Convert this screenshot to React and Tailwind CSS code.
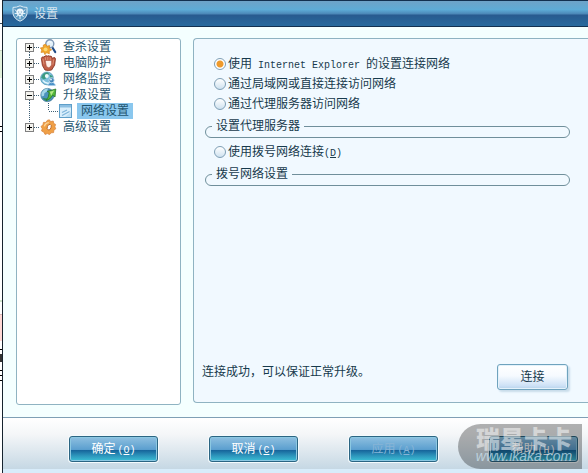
import { useState } from 'react';

const ScanIcon = () => (
    <svg width="17" height="16" viewBox="0 0 17 16" className="shrink-0">
        <path d="M12.4 8.5 15.2 13" stroke="#1d4a86" strokeWidth="2.2" strokeLinecap="round" />
        <circle cx="9.8" cy="4.8" r="4" fill="#e3f1fa" stroke="#8098b5" strokeWidth="1.4" />
        <path d="M7.8 3.6q1.6-1.8 3.6-.2" stroke="#fff" fill="none" />
        <path
            d="M5.6 5.2 6.9 7.3 9.6 6.6 9.3 9.2 11.6 10.8 9.2 12 9.3 14.8 6.8 13.7 4.8 15.6 3.9 13 1 13.4 1.9 11 .4 8.9 3.2 8.6 3.4 6z"
            fill="#f2a92e"
            stroke="#d98a24"
            strokeWidth=".8"
        />
        <circle cx="5.6" cy="10.3" r="1.9" fill="#fbd874" />
    </svg>
);

const GloveIcon = () => (
    <svg width="17" height="16" viewBox="0 0 17 16" className="shrink-0">
        <path
            d="M5 15 2.4 10.4 1.4 3.4Q2 1.2 3.8 2L5.2 1Q6.4.2 7.2 1.2 8.6.2 9.8 1.2 11.2.8 12 2.2l.4 1.6 1.4-1.2q1.6-.2 1.6 1.4L14.6 10.2 11.6 15q-3.4.9-6.6 0z"
            fill="#c05f47"
            stroke="#8a3323"
            strokeWidth=".9"
        />
        <path d="M5.2 5.4h6.4V10L9 13 6.4 11.4z" fill="#fdeee6" stroke="#9c3f2c" strokeWidth=".5" />
        <path d="M3 4 4 9.4M5.4 2.2 5.6 5M7.8 2v3M10.2 2.4v2.8M13.8 4.4 12.8 9.6" stroke="#e49a80" strokeWidth=".8" />
    </svg>
);

const MonitorIcon = () => (
    <svg width="17" height="16" viewBox="0 0 17 16" className="shrink-0">
        <circle cx="7" cy="7.4" r="6.4" fill="#7dbfdc" stroke="#4f93b2" strokeWidth=".7" />
        <path d="M1.2 6.8Q2.6 1.6 7.2 1.2L9.4 3 6.6 5 6 7.6 3.8 8.6z" fill="#3c9a82" />
        <path d="M9.6 3.8 12.4 5 13 8 10.4 7.6z" fill="#3a9c7c" />
        <path d="M2.8 9.4q2.6 3.6 6.6 2.6" stroke="#e2f6ff" strokeWidth="1.6" fill="none" />
        <circle cx="6.8" cy="5" r="1.9" fill="#eefafb" />
        <path d="M7.4 14.8q.8-3.6 4.2-3.6t4.2 3.6z" fill="#4a91c8" stroke="#e9f6ff" strokeWidth=".6" />
        <circle cx="11.6" cy="9.2" r="2.6" fill="#4585b8" stroke="#d9ecf9" strokeWidth=".7" />
        <circle cx="11" cy="8.6" r="1" fill="#d9ecf9" />
    </svg>
);

const UpdateIcon = () => (
    <svg width="17" height="16" viewBox="0 0 17 16" className="shrink-0">
        <circle cx="7.4" cy="8" r="6.6" fill="#4c93bd" stroke="#35708f" strokeWidth=".7" />
        <path d="M1.4 6.4Q3.4 1.8 8 1.6L7 4.4 4.4 6.2 4 8.8 1.6 9.4z" fill="#a3d6e8" />
        <path d="M2.6 10.8q1.4 3 5.2 3.4l-1-2.6z" fill="#2f8b5c" />
        <path d="M15.8 2 15 10 12.8 8.2Q10.4 12.8 6 13.4 9 10.4 9.2 5.6L7.2 4.4z" fill="#55b83c" stroke="#26752a" strokeWidth=".8" />
        <path d="M14.2 3.6 9.8 4.8l1.4 4z" fill="#b4e787" />
    </svg>
);

const GearIcon = () => (
    <svg width="17" height="16" viewBox="0 0 17 16" className="shrink-0">
        <path
            d="M7.2 1.4 9.4.8l1.2 1.8L13.2 2l.6 2.6 1.8.8-.8 2.4 1 2-2 1.4-.2 2.4-2.6.2L9.6 15.6l-2.2-1L5 15.4 3.8 13 1.6 12l.6-2.4L1 7.4l2-1.4L3.4 3.4l2.6 0z"
            fill="#f0a046"
            stroke="#d98640"
            strokeWidth=".8"
        />
        <path d="M4.4 7.4Q5.2 4 8.8 3.6" stroke="#fbd69c" strokeWidth="1.3" fill="none" />
        <ellipse cx="9.2" cy="8.2" rx="1.9" ry="2.9" transform="rotate(20 9.2 8.2)" fill="#fff" stroke="#b9682a" strokeWidth=".9" />
    </svg>
);

const PageIcon = () => (
    <svg width="14" height="16" viewBox="0 0 14 16" className="shrink-0">
        <rect x=".5" y="1.5" width="12" height="13" fill="#d9eefb" stroke="#5f9fc9" />
        <rect x="1" y="2" width="11" height="2.5" fill="#8dbfe2" />
        <path d="M3 12.5 10.5 8.5M3 9.5 8 7" stroke="#7db4da" strokeWidth="1.2" />
        <path d="M12 9v5H6z" fill="#a8d3ee" opacity=".6" />
    </svg>
);

const ShieldLogo = () => (
    <svg width="16" height="17" viewBox="0 0 16 17" className="shrink-0">
        <path d="M1 2.4Q4.4 2.6 8 .8q3.6 1.8 7 1.6v6.2q-.8 5-7 7.6-6.2-2.6-7-7.6z" fill="#5f9cc4" stroke="#dcebf5" />
        <path d="M4.2 6.8Q5 3.6 8 3.6t3.8 3.2L10.6 10 8 11.4 5.4 10z" fill="#eef7fc" />
        <path d="M2.6 4.4 4.4 6M13.4 4.4 11.6 6M2.6 8.4 5 8.6M13.4 8.4 11 8.6M4.4 12l1.8-2M11.6 12 9.8 10M8 14v-3" stroke="#e4f1f9" />
        <path d="M6.2 7h1M8.8 7h1M6.8 9.2h2.4" stroke="#5d95bb" />
    </svg>
);

const NODES = [
    { label: '查杀设置', Icon: ScanIcon },
    { label: '电脑防护', Icon: GloveIcon },
    { label: '网络监控', Icon: MonitorIcon },
    { label: '升级设置', Icon: UpdateIcon, children: ['网络设置'] },
    { label: '高级设置', Icon: GearIcon },
];

const Branch = ({ open, first, last }) => (
    <svg width="15" height="16" viewBox="0 0 15 16" shapeRendering="crispEdges">
        <g stroke="#3f6076" strokeDasharray="1 1">
            {!first && <path d="M4.5 0v4" />}
            {!last && <path d="M4.5 13v3" />}
            <path d="M9 8.5h6" />
        </g>
        <rect x=".5" y="4.5" width="8" height="8" fill="#f4f3ee" stroke="#808080" />
        <path d={open ? 'M2 8.5h5' : 'M2 8.5h5M4.5 6v5'} stroke="#000" />
    </svg>
);

const Mono = ({ children }) => <span className="font-['Liberation_Mono',monospace] text-[10px]">{children}</span>;

const HotKey = ({ letter }) => (
    <Mono>
        (<u>{letter}</u>)
    </Mono>
);

const TreeNode = ({ label, Icon, children, first, last }) => (
    <li>
        <div className="flex h-4 items-center">
            <button type="button" aria-label={label} className="shrink-0">
                <Branch open={!!children} first={first} last={last} />
            </button>
            <Icon />
            <span className="ml-1.5">{label}</span>
        </div>
        {children && (
            <ul>
                {children.map((child) => (
                    <li key={child} className="flex h-4 items-center">
                        <svg width="34" height="16" shapeRendering="crispEdges" className="shrink-0">
                            <path d="M4.5 0v16M23.5 0v8M24 8.5h10" fill="none" stroke="#3f6076" strokeDasharray="1 1" />
                        </svg>
                        <PageIcon />
                        <a href="#network" className="ml-1 bg-[#8ac7ee] px-1">
                            {child}
                        </a>
                    </li>
                ))}
            </ul>
        )}
    </li>
);

const RadioRow = ({ value, current, onChange, children }) => (
    <label className="ml-5 flex h-5 items-center gap-0.5">
        <input
            type="radio"
            name="connection"
            checked={current === value}
            onChange={() => onChange(value)}
            className="size-3 shrink-0 appearance-none rounded-full border border-[#7f9fb5] bg-[linear-gradient(#ffffff,#cfe2f0)] checked:bg-[radial-gradient(circle,#ee9a2c_3px,#ffffff_4px)]"
        />
        <span className="whitespace-pre">{children}</span>
    </label>
);

const Group = ({ title }) => (
    <fieldset className="mt-1 mr-[18px] ml-[11px] rounded-md border border-[#708f9b] pb-[3px]">
        <legend className="ml-1.5 px-1 leading-4">{title}</legend>
    </fieldset>
);

const FooterButton = ({ label, letter, disabled }) => (
    <button
        type="button"
        disabled={disabled}
        className="h-[26px] w-[89px] rounded-[3px] border border-[#2b6583] bg-[linear-gradient(#8fc0e0,#5b9fcf_52%,#17669c_56%,#2a8fb8_75%,#3cc0d6)] text-white shadow-[inset_0_0_0_1px_#8cc8e2,0_0_0_1px_#f5fbfd] disabled:text-[#86b4d6]"
    >
        {label}
        <span className="ml-0.5">
            <HotKey letter={letter} />
        </span>
    </button>
);

// slivers of the window lying underneath, left of the dialog
const Backdrop = () => (
    <div className="flex w-0.5 shrink-0 flex-col bg-white">
        <div className="h-6 border-b border-[#33475a]" />
        <div className="mt-[26px] h-[28px] border-t border-[#c9d6c2] bg-[#e2f2dc]" />
        <div className="mt-12 h-px bg-black" />
        <div className="mt-1 h-px bg-black" />
        <div className="mt-[168px] h-0.5 bg-[#cfe5cc]" />
        <div className="mt-3 h-[27px] border-t border-[#d8b8b8] bg-[#ffd9d6]" />
        <div className="mt-2 h-px bg-black" />
        <div className="mt-1 h-2 bg-[#333]" />
        <div className="mt-2 h-px bg-black" />
        <div className="mt-1 h-px bg-black" />
        <div className="mt-1 h-px bg-black" />
    </div>
);

export default function App() {
    const [mode, setMode] = useState('ie');

    return (
        <div className="flex min-h-screen font-['Liberation_Sans','Noto_Sans_CJK_SC',sans-serif] text-xs text-[#173a4c]">
            <Backdrop />
            <div className="relative flex min-w-0 flex-1 flex-col border-l border-[#16232e] bg-[#f4ffff]">
                <header className="flex h-[27px] items-center gap-1.5 border-y border-[#12304f] bg-[linear-gradient(#6ea3c8,#5dabd6_35%,#4b86b6_52%,#285a8f_56%,#286a9e)] pl-[9px] text-[#d8e6f0]">
                    <ShieldLogo />
                    <h1>设置</h1>
                </header>

                <main className="flex flex-1 gap-3 pt-[11px] pb-3 pl-[13px]">
                    <nav className="w-[165px] shrink-0 rounded-[3px] border border-[#8fb3c2] bg-white pl-2 text-[#1f5670]">
                        <ul>
                            {NODES.map((node, i) => (
                                <TreeNode key={node.label} {...node} first={i === 0} last={i === NODES.length - 1} />
                            ))}
                        </ul>
                    </nav>

                    <section className="mb-0.5 flex min-w-0 flex-1 flex-col rounded-l-[4px] border border-r-0 border-[#8fb3c2] bg-[#f1f9ff] pt-[15px] pb-3">
                        <RadioRow value="ie" current={mode} onChange={setMode}>
                            使用<Mono> Internet Explorer </Mono>的设置连接网络
                        </RadioRow>
                        <RadioRow value="lan" current={mode} onChange={setMode}>
                            通过局域网或直接连接访问网络
                        </RadioRow>
                        <RadioRow value="proxy" current={mode} onChange={setMode}>
                            通过代理服务器访问网络
                        </RadioRow>
                        <Group title="设置代理服务器" />
                        <div className="mt-1">
                            <RadioRow value="dialup" current={mode} onChange={setMode}>
                                使用拨号网络连接
                                <HotKey letter="D" />
                            </RadioRow>
                        </div>
                        <Group title="拨号网络设置" />

                        <div className="mt-auto flex items-start justify-between pr-5 pl-2">
                            <p>连接成功，可以保证正常升级。</p>
                            <button
                                type="button"
                                className="h-[26px] w-[71px] rounded-[3px] border border-[#6fa3be] bg-[linear-gradient(#ffffff,#f6faff_45%,#cfe2f6_85%,#b5d3ec)] shadow-[inset_0_0_0_1px_#e4f2fb,2px_2px_2px_#c8dcea]"
                            >
                                连接
                            </button>
                        </div>
                    </section>
                </main>

                <footer className="flex h-14 items-start justify-between border-t border-[#7f9fb5] bg-[linear-gradient(#ffffff,#f4f6f8_30%,#c6d8e4_92%,#d8ecfa_93%)] pt-[18px] pr-2.5 pl-[66px]">
                    <FooterButton label="确定" letter="O" />
                    <FooterButton label="取消" letter="C" />
                    <FooterButton label="应用" letter="A" disabled />
                    <FooterButton label="帮助" letter="H" />
                </footer>

                <div className="pointer-events-none absolute right-1.5 bottom-1 flex h-[45px] w-[124px] flex-col items-center rounded-l-full bg-black/30 pt-1 pl-2 text-white/50">
                    <span className="font-['Noto_Sans_CJK_SC',sans-serif] text-2xl leading-5 font-black">瑞星卡卡</span>
                    <span className="text-sm leading-4 text-[#cfe8f5]/70 italic">www.ikaka.com</span>
                </div>
            </div>
        </div>
    );
}
